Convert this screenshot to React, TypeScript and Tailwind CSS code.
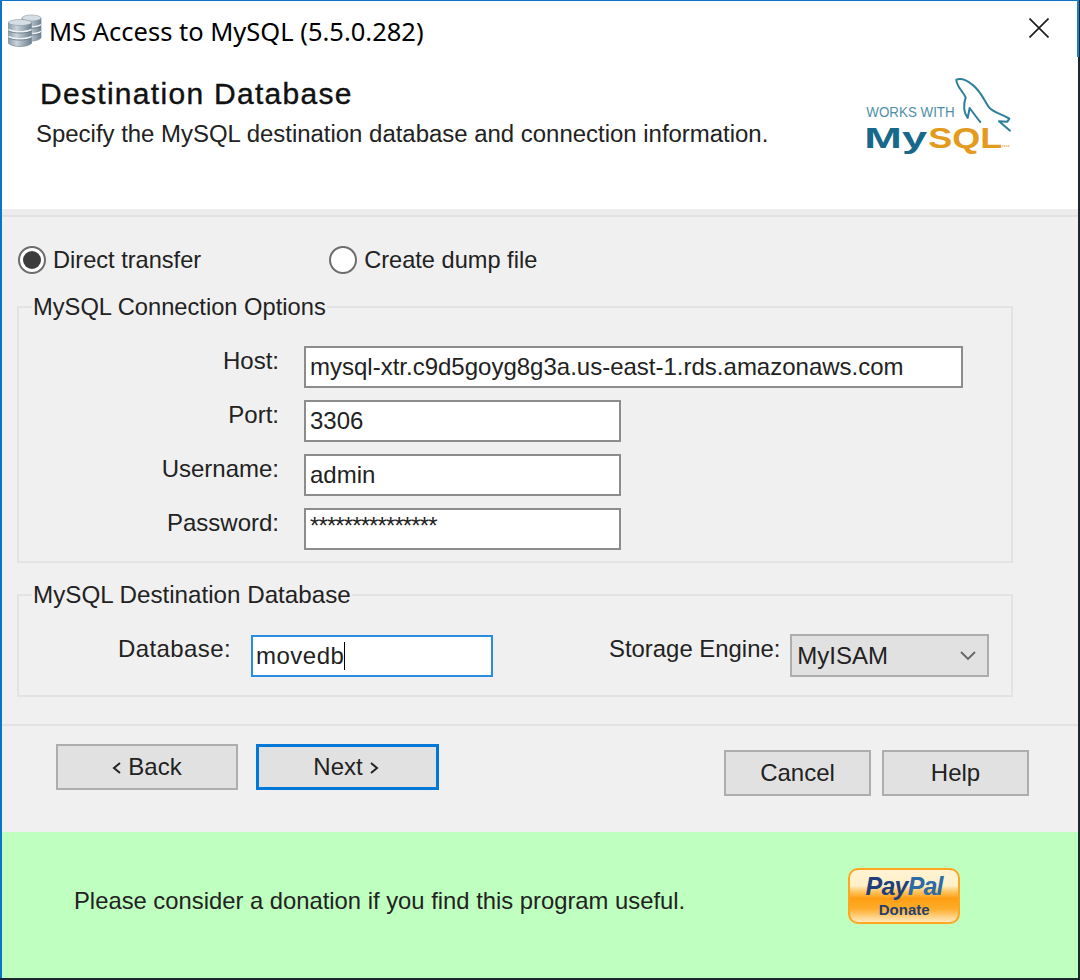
import React from "react";

const sans = "font-['Liberation_Sans',Arial,sans-serif]";

function DbIcon() {
  const Cyl = ({ x, y, w, h }: { x: number; y: number; w: number; h: number }) => {
    const r = w / 2;
    const t = 3;
    const third = (h - t * 2) / 3;
    const band = (yy: number) => `M0 ${yy} C${w * 0.2} ${yy + 3} ${w * 0.8} ${yy + 3} ${w} ${yy}`;
    return (
      <g transform={`translate(${x} ${y})`}>
        <path d={`M0 ${t} V${h - t} C${w * 0.2} ${h + 1} ${w * 0.8} ${h + 1} ${w} ${h - t} V${t} Z`} fill="url(#dbg)" stroke="#7b8b98" strokeWidth="0.7" />
        <ellipse cx={r} cy={t} rx={r} ry={t} fill="#d5dee4" stroke="#8c9ba7" strokeWidth="0.6" />
        <path d={`${band(t + third)} ${band(t + third * 2)}`} fill="none" stroke="#eef2f5" strokeWidth="1.6" />
        <path d={`${band(t + third + 1.3)} ${band(t + third * 2 + 1.3)}`} fill="none" stroke="#5f6f7c" strokeWidth="0.7" />
      </g>
    );
  };
  return (
    <svg width="34" height="34" viewBox="0 0 34 34" className="shrink-0 -mt-[2px]">
      <defs>
        <linearGradient id="dbg" x1="0" x2="1" y1="0" y2="0">
          <stop offset="0" stopColor="#8d9eaa" />
          <stop offset="0.35" stopColor="#c9d4dc" />
          <stop offset="1" stopColor="#6d7f8d" />
        </linearGradient>
      </defs>
      <Cyl x={14} y={2} w={19} h={26} />
      <Cyl x={0.5} y={6.5} w={23} h={27} />
    </svg>
  );
}

function MySqlLogo() {
  return (
    <svg width="157" height="84" viewBox="60 220 471 252" className="shrink-0">
      <text x="82" y="350" fontFamily="Liberation Sans" fontSize="44" fill="#4f8fa8" textLength="265" lengthAdjust="spacingAndGlyphs">WORKS WITH</text>
      <text x="76" y="441" fontFamily="Liberation Sans" fontWeight="700" fontSize="86" fill="#17688a" textLength="188" lengthAdjust="spacingAndGlyphs">My</text>
      <text x="268" y="441" fontFamily="Liberation Sans" fontWeight="700" fontSize="86" fill="#e49a1c" textLength="222" lengthAdjust="spacingAndGlyphs">SQL</text>
      <path d="M352 237 C366 232 385 240 400 252 C424 270 435 298 450 320 C464 336 490 340 511 354 L505 363 L480 362 L513 390 M352 240 C356 262 372 272 380 290 C372 315 374 335 386 352 L392 322 C402 335 412 350 424 364" fill="none" stroke="#2d7f9b" strokeWidth="6" strokeLinejoin="round" strokeLinecap="round" />
      <path d="M490 436 H514" stroke="#e49a1c" strokeWidth="4" strokeDasharray="3 3" />
    </svg>
  );
}

function Radio({ checked, label, className }: { checked?: boolean; label: string; className?: string }) {
  return (
    <div className={`flex items-center gap-[7px] ${className ?? ""}`}>
      <span className="w-[28px] h-[28px] rounded-full border-2 border-[#6d6d6d] bg-white flex items-center justify-center">
        {checked && <span className="w-[18px] h-[18px] rounded-full bg-[#3c3c3c]" />}
      </span>
      <span className="text-[23.6px] leading-[28px] text-[#222]">{label}</span>
    </div>
  );
}

function Field({ label, value, wide, secret }: { label: string; value: string; wide?: boolean; secret?: boolean }) {
  return (
    <div className="flex items-start h-[42px]">
      <div className="w-[260px] text-right text-[24px] leading-[30px] text-[#222]">{label}</div>
      <div className={`ml-[25px] h-[42px] bg-white border-2 border-[#8c8c8c] pl-[4px] text-[24px] text-[#222] ${secret ? "leading-[31px] tracking-[-0.9px]" : "leading-[38px]"} ${wide ? "w-[659px]" : "w-[317px]"}`}>
        {value}
      </div>
    </div>
  );
}

function Btn({ label, primary, className }: { label: React.ReactNode; primary?: boolean; className?: string }) {
  return (
    <div
      className={`h-[46px] flex items-center justify-center bg-[#e1e1e1] text-[24px] text-[#222] ${primary ? "border-[3px] border-[#0078d7]" : "border-2 border-[#adadad]"} ${className ?? ""}`}
    >
      {label}
    </div>
  );
}

function Chevron({ dir }: { dir: "l" | "r" }) {
  return (
    <svg width="10" height="14" viewBox="0 0 10 14" className="mt-[2px]">
      <path d={dir === "l" ? "M8 2 L2 7 L8 12" : "M2 2 L8 7 L2 12"} fill="none" stroke="#222" strokeWidth="2" />
    </svg>
  );
}

export default function App() {
  return (
    <div className={`${sans} relative w-[1080px] h-[980px] bg-[#1d2730] flex flex-col overflow-hidden`}>
      <div className="absolute left-[1077px] top-0 w-[2px] h-[57px] bg-[#1a7fd0]" />
      <div className="w-[1078px] h-[978px] border-l-2 border-t border-[#0b74c8] flex flex-col bg-white">
        {/* header */}
        <div className="h-[208px] bg-white shrink-0">
          <div className="flex items-center h-[60px] pl-[6px] pr-[29px]">
            <DbIcon />
            <div className="ml-[7px] font-['Noto_Sans',sans-serif] text-[25.5px] text-black flex-1">MS Access to MySQL (5.5.0.282)</div>
            <svg width="20" height="20" viewBox="0 0 20 20" className="-mt-[6px]"><path d="M0.5 0.5 L19.5 19.5 M19.5 0.5 L0.5 19.5" stroke="#1a1a1a" strokeWidth="1.6" /></svg>
          </div>
          <div className="flex items-start">
            <div className="flex-1">
              <div className="ml-[38px] mt-[16px] text-[30px] leading-[34px] text-[#111] tracking-[1.3px] [-webkit-text-stroke:0.4px_#111]">Destination Database</div>
              <div className="ml-[34px] mt-[8px] text-[23.95px] leading-[30px] text-[#222]">Specify the MySQL destination database and connection information.</div>
            </div>
            <div className="mr-[62px] mt-[13px]"><MySqlLogo /></div>
          </div>
        </div>
        <div className="h-[8px] bg-[#ececec] border-b-2 border-[#e2e2e2] shrink-0" />

        {/* body */}
        <div className="h-[615px] bg-[#f0f0f0] shrink-0">
          <div className="flex items-center pt-[29px] pl-[16px]">
            <Radio checked label="Direct transfer" />
            <Radio label="Create dump file" className="ml-[128px]" />
          </div>
          <fieldset className="ml-[15px] mt-[19px] w-[996px] h-[270px] border-2 border-[#e3e3e3] pl-[13px]">
            <legend className="text-[23.7px] leading-[28px] text-[#222] px-[1px]">MySQL Connection Options</legend>
            <div className="flex flex-col gap-[12px] mt-[25px] -ml-[13px]">
              <Field label="Host:" value="mysql-xtr.c9d5goyg8g3a.us-east-1.rds.amazonaws.com" wide />
              <Field label="Port:" value="3306" />
              <Field label="Username:" value="admin" />
              <Field label="Password:" value="***************" secret />
            </div>
          </fieldset>
          <fieldset className="ml-[15px] mt-[18px] w-[996px] h-[116px] border-2 border-[#e3e3e3] pl-[13px]">
            <legend className="text-[24.2px] leading-[28px] text-[#222] px-[1px]">MySQL Destination Database</legend>
            <div className="flex items-start mt-[26px] -ml-[13px]">
              <div className="w-[212px] text-right text-[24px] leading-[28px] text-[#222] tracking-[0.4px]">Database:</div>
              <div className="ml-[20px] w-[242px] h-[42px] bg-white border-2 border-[#2b8ce0] pl-[3px] text-[24px] tracking-[0.5px] text-[#222] flex items-center">
                movedb<span className="w-[1px] h-[28px] bg-black" />
              </div>
              <div className="ml-[116px] text-[23.9px] leading-[28px] text-[#222]">Storage Engine:</div>
              <div className="ml-[10px] -mt-[1px] w-[199px] h-[43px] bg-[#e1e1e1] border-2 border-[#adadad] pl-[5px] pr-[10px] text-[24px] text-[#222] flex items-center justify-between">
                <span>MyISAM</span>
                <svg width="18" height="12" viewBox="0 0 18 12"><path d="M2 2 L9 9 L16 2" fill="none" stroke="#666" strokeWidth="1.8" /></svg>
              </div>
            </div>
          </fieldset>
          <div className="h-[2px] bg-[#e3e3e3] mt-[27px]" />
          <div className="flex items-start pl-[54px] pr-[49px] mt-[18px]">
            <Btn className="w-[182px]" label={<span className="flex items-center gap-[6px]"><Chevron dir="l" />Back</span>} />
            <Btn primary className="w-[183px] ml-[18px]" label={<span className="flex items-center gap-[6px] -ml-[3px]">Next<Chevron dir="r" /></span>} />
            <Btn className="w-[147px] ml-auto mt-[6px]" label="Cancel" />
            <Btn className="w-[147px] ml-[11px] mt-[6px]" label="Help" />
          </div>
        </div>

        {/* donation */}
        <div className="flex-1 bg-[#bfffbf] flex items-center pl-[72px]">
          <div className="text-[23.8px] text-[#222] -mt-[8px]">Please consider a donation if you find this program useful.</div>
          <div className="ml-[163px] -mt-[18px] w-[112px] h-[56px] rounded-[10px] border-2 border-[#ffa51f] bg-[linear-gradient(#fff3d2_0%,#fff0c8_30%,#ffc45c_42%,#ff9d12_55%,#ffad2c_75%,#ffe9bf_100%)] flex flex-col items-center shrink-0">
            <div className="italic font-bold text-[25px] leading-[30px] tracking-[-0.8px] mt-[1px]"><span className="text-[#1f3f7c]">Pay</span><span className="text-[#2c6aa8]">Pal</span></div>
            <div className="font-bold text-[15px] leading-[17px] text-[#24406f]">Donate</div>
          </div>
        </div>
      </div>
    </div>
  );
}
